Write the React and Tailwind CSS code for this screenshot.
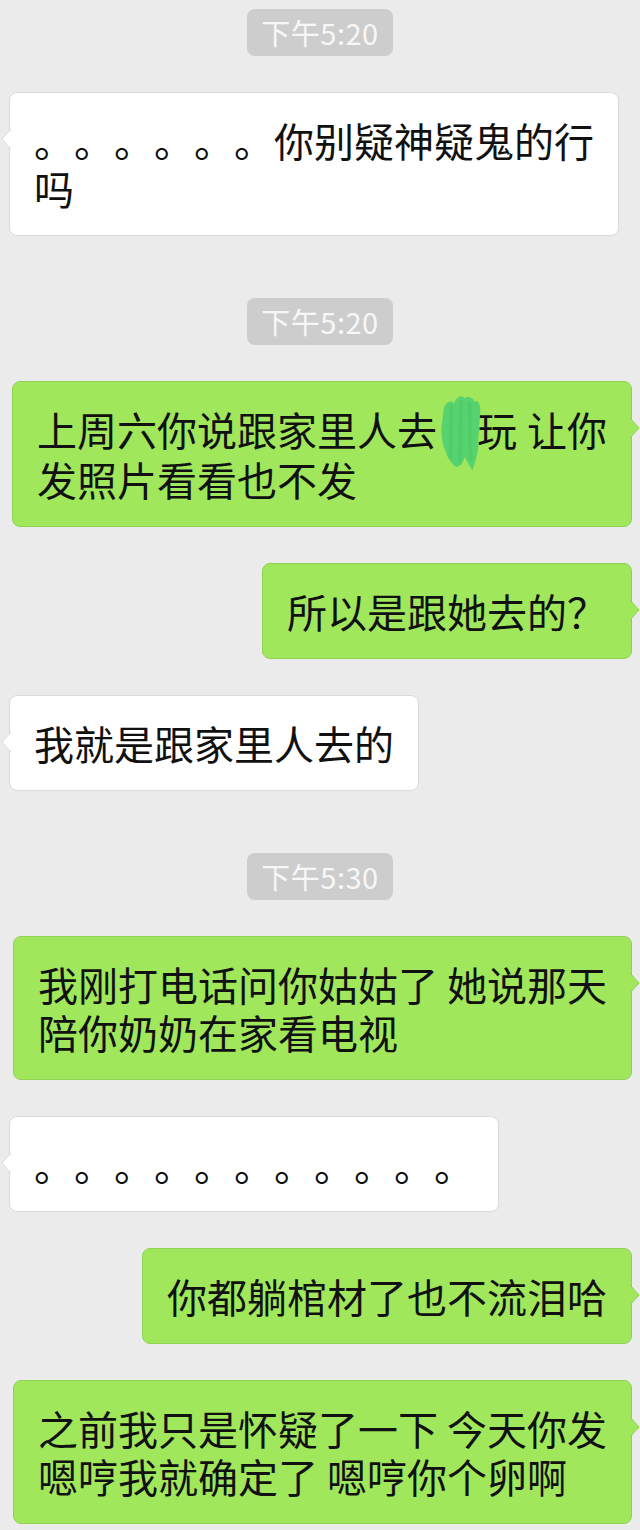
import React from 'react';

const FONT = { fontFamily: '"Noto Sans CJK SC", "Noto Sans", sans-serif' };

const Time = ({ label, first }) => (
    <div className={`self-center flex h-[47px] items-center rounded-[8px] bg-[#cdcdcd] px-[14px] text-[29px] tracking-[0.5px] text-[#f7f7f7] ${first ? '' : 'mt-[26px]'}`}>
        {label}
    </div>
);

const Tail = ({ mine }) => (
    <svg
        width="10"
        height="22"
        viewBox="0 0 10 22"
        className={`absolute top-[35px] ${mine ? 'right-[-9px]' : 'left-[-9px]'}`}
    >
        {mine ? (
            <path d="M0 1 L9 11 L0 21" fill="#a0e75c" stroke="#8fd253" strokeWidth="1" />
        ) : (
            <path d="M10 1 L1 11 L10 21" fill="#ffffff" stroke="#dadada" strokeWidth="1" />
        )}
    </svg>
);

// green smudge that hides a place name
const Smudge = () => (
    <span className="relative inline-block h-[40px] w-[40px] align-middle">
        <svg width="46" height="92" viewBox="0 0 48 90" className="absolute left-[1px] top-[-28px]">
            <path
                d="M6 20 C8 12 14 10 17 14 C19 8 24 4 28 9 C31 6 36 8 38 12 C42 10 45 16 44 24 L42 52 C43 62 40 72 36 84 C33 80 30 74 28 70 C26 76 22 82 18 80 C14 76 10 72 8 64 C4 56 3 44 4 36 Z"
                fill="#56d26e"
            />
            <path d="M14 18 L13 70 M24 12 L23 76 M33 14 L34 72" stroke="#4cc965" strokeWidth="4" strokeLinecap="round" opacity="0.5" />
        </svg>
    </span>
);

const Bubble = ({ mine, children }) => (
    <div className={`flex ${mine ? 'justify-end pr-[8px]' : 'justify-start pl-[9px]'}`}>
        <div
            className={`relative rounded-[8px] border px-[24px] py-[23px] text-[40px] leading-[48px] text-[#111] [text-spacing-trim:space-all] ${
                mine ? 'border-[#8fd253] bg-[#a0e75c]' : 'border-[#dadada] bg-white'
            }`}
        >
            <Tail mine={mine} />
            {children}
        </div>
    </div>
);

const Lines = ({ lines }) => lines.map((l, i) => (
    <div key={i} className="whitespace-nowrap">{l}</div>
));

export default function App() {
    return (
        <div className="flex min-h-[1530px] w-[640px] flex-col gap-[36px] bg-[#ebebeb] pt-[9px]" style={FONT}>
            <Time label="下午5:20" first />
            <Bubble>
                <Lines lines={['。。。。。。你别疑神疑鬼的行', '吗']} />
            </Bubble>

            <Time label="下午5:20" />
            <Bubble mine>
                <div className="whitespace-nowrap">
                    上周六你说跟家里人去<Smudge />玩<span className="inline-block w-[10px]" />让你
                </div>
                <div className="whitespace-nowrap">发照片看看也不发</div>
            </Bubble>
            <Bubble mine>
                <Lines lines={['所以是跟她去的？']} />
            </Bubble>
            <Bubble>
                <Lines lines={['我就是跟家里人去的']} />
            </Bubble>

            <Time label="下午5:30" />
            <Bubble mine>
                <Lines lines={['我刚打电话问你姑姑了 她说那天', '陪你奶奶在家看电视']} />
            </Bubble>
            <Bubble>
                <Lines lines={['。。。。。。。。。。。']} />
            </Bubble>
            <Bubble mine>
                <Lines lines={['你都躺棺材了也不流泪哈']} />
            </Bubble>
            <Bubble mine>
                <Lines lines={['之前我只是怀疑了一下 今天你发', '嗯哼我就确定了 嗯哼你个卵啊']} />
            </Bubble>
        </div>
    );
}
